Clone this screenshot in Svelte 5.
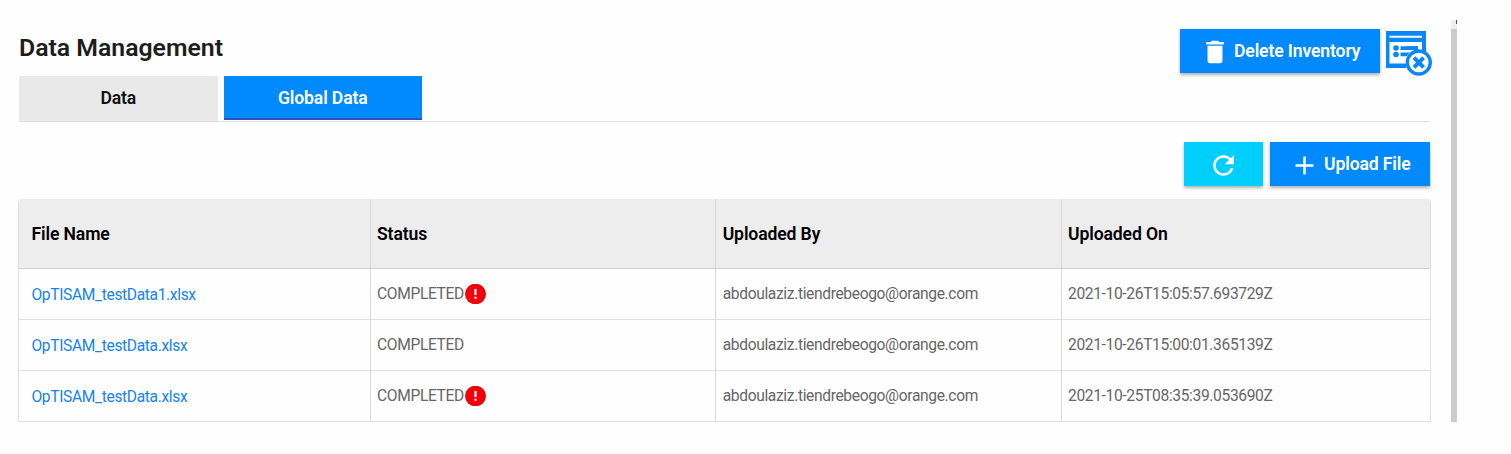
<script>
  const columns = ['File Name', 'Status', 'Uploaded By', 'Uploaded On'];
  const files = [
    { name: 'OpTISAM_testData1.xlsx', failed: true, by: 'abdoulaziz.tiendrebeogo@orange.com', on: '2021-10-26T15:05:57.693729Z' },
    { name: 'OpTISAM_testData.xlsx', failed: false, by: 'abdoulaziz.tiendrebeogo@orange.com', on: '2021-10-26T15:00:01.365139Z' },
    { name: 'OpTISAM_testData.xlsx', failed: true, by: 'abdoulaziz.tiendrebeogo@orange.com', on: '2021-10-25T08:35:39.053690Z' }
  ];
</script>

<div class="page">
  <main>
    <header>
      <div class="heading">
        <h1>Data Management</h1>
        <nav>
          <button class="tab">Data</button>
          <button class="tab active">Global Data</button>
        </nav>
      </div>
      <div class="tools">
        <button class="btn delete">
          <svg width="30" height="30" viewBox="0 0 24 24" fill="#fff"><path d="M6 19c0 1.100.9 2 2 2h8c1.100 0 2-.9 2-2V7H6v12zM19 4h-3.500l-1-1h-5l-1 1H5v2h14V4z" /></svg>
          <span>Delete Inventory</span>
        </button>
        <svg class="log" width="47" height="46" viewBox="0 0 47 46">
          <path fill="#0a87f7" d="M0 0H40V37H0z" />
          <path fill="#fff" d="M3.500 4.800H36V6.800H3.500zM3.500 11H36V32.500H3.500z" />
          <g fill="#0a87f7">
            <circle cx="10" cy="17" r="2.800" />
            <circle cx="10" cy="23.500" r="2.800" />
            <path d="M14.500 15.200H32V18.900H14.500zM14.500 21.600H26V25.300H14.500z" />
          </g>
          <circle cx="32.800" cy="31.500" r="13.500" fill="#fff" />
          <path fill="#0a87f7" d="M36 11h4v10h-4zM0 33h20v4H0zM20 15.200H32V18.900H20z" />
          <circle cx="32.800" cy="31.500" r="11.500" fill="#fff" stroke="#0a87f7" stroke-width="3.400" />
          <path d="M28 26.700l9.600 9.600m0-9.600l-9.600 9.600" stroke="#0a87f7" stroke-width="4" />
        </svg>
      </div>
    </header>

    <div class="actions">
      <button class="btn refresh" aria-label="Refresh">
        <svg width="31" height="31" viewBox="0 0 24 24" fill="#fff"><path d="M17.650 6.350C16.200 4.900 14.210 4 12 4c-4.420 0-7.990 3.580-7.990 8s3.570 8 7.990 8c3.730 0 6.840-2.550 7.730-6h-2.080c-.82 2.330-3.040 4-5.650 4-3.310 0-6-2.690-6-6s2.690-6 6-6c1.660 0 3.140.69 4.220 1.780L13 11h7V4l-2.350 2.350z" /></svg>
      </button>
      <button class="btn upload">
        <svg width="31" height="31" viewBox="0 0 24 24" fill="#fff"><path d="M19 12.950h-6.050V19h-1.900v-6.050H5v-1.900h6.050V5h1.900v6.050H19z" /></svg>
        <span>Upload File</span>
      </button>
    </div>

    <div class="table">
      <div class="row head">
        {#each columns as column}
          <div class="cell">{column}</div>
        {/each}
      </div>
      {#each files as file}
        <div class="row">
          <div class="cell link">{file.name}</div>
          <div class="cell">
            COMPLETED
            {#if file.failed}
              <svg class="alert" width="21" height="20" viewBox="0 0 21 20">
                <ellipse cx="10.500" cy="10" rx="10.500" ry="10.300" fill="#f4000a" />
                <path fill="#fff" d="M9.400 4.900h2.200v6H9.400zM9.400 12.700h2.200v2H9.400z" />
              </svg>
            {/if}
          </div>
          <div class="cell">{file.by}</div>
          <div class="cell">{file.on}</div>
        </div>
      {/each}
    </div>
  </main>
  <div class="scrollbar"><div class="thumb"></div></div>
</div>

<style>
  :global(body) {
    background: #fefefe;
  }
  .page {
    box-sizing: border-box;
    display: flex;
    gap: 20px;
    width: 1511px;
    height: 454px;
    padding: 20px 54px 32px 18px;
    font-family: Roboto, sans-serif;
    font-size: 15.600px;
    overflow: hidden;
  }
  main {
    width: 1413px;
  }
  header {
    box-sizing: border-box;
    display: flex;
    justify-content: space-between;
    height: 102px;
    margin: 0 1px;
    border-bottom: 1px solid #dfdfdf;
  }
  h1 {
    box-sizing: border-box;
    margin: 0;
    padding-top: 12px;
    height: 56px;
    font-size: 24.800px;
    line-height: 31px;
    font-weight: 600;
    color: #1d1d1d;
    white-space: nowrap;
  }
  nav {
    display: flex;
    gap: 6px;
  }
  button {
    border: 0;
    padding: 0;
    font: 600 17.600px/20px Roboto, sans-serif;
    letter-spacing: -0.130px;
    white-space: nowrap;
  }
  .tab {
    box-sizing: border-box;
    width: 198.500px;
    height: 45px;
    padding-bottom: 1px;
    background: #e9e9e9;
    color: #111;
  }
  .active {
    height: 44px;
    padding: 1px 0 0;
    background: #008afe;
    color: #fff;
    border-bottom: 2px solid #2c51bd;
  }
  .tools {
    display: flex;
    gap: 6px;
    margin-right: -3px;
    padding-top: 9px;
  }
  .btn {
    display: flex;
    align-items: center;
    height: 44px;
    background: #008afe;
    color: #fff;
    box-shadow: 0 2px 3px rgba(0, 0, 0, 0.3);
  }
  .delete {
    width: 200px;
    padding-left: 20px;
    gap: 4px;
  }
  .btn svg {
    margin-top: 2px;
  }
  .log {
    margin-top: 2px;
  }
  .actions {
    display: flex;
    justify-content: flex-end;
    gap: 7px;
    height: 57px;
    padding: 20px 1px 0 0;
  }
  .refresh {
    width: 79px;
    justify-content: center;
    background: #00cffe;
  }
  .upload {
    width: 160px;
    padding-left: 19px;
    gap: 4px;
  }
  .table {
    box-sizing: border-box;
    border: 1px solid #dfdfdf;
    border-top: 0;
    border-radius: 4px 4px 0 0;
    overflow: hidden;
    height: 223px;
  }
  .row {
    box-sizing: border-box;
    display: grid;
    grid-template-columns: 351px 345px 346px 1fr;
    height: 51px;
    border-bottom: 1px solid #dfdfdf;
    color: #666;
    letter-spacing: -0.360px;
  }
  .row:last-child {
    border-bottom: 0;
    height: 50px;
  }
  .head {
    height: 70px;
    background: #ededed;
    color: #000;
    font-size: 17.600px;
    font-weight: 600;
    letter-spacing: -0.130px;
    border-color: #d0d0d0;
  }
  .cell {
    display: flex;
    align-items: center;
    border-left: 1px solid #d8d8d8;
    padding-left: 6px;
    white-space: nowrap;
  }
  .cell:first-child {
    border: 0;
    padding-left: 12.500px;
  }
  .cell:nth-child(3) {
    padding-left: 6.700px;
  }
  .row .link {
    color: #1683ee;
    padding-top: 2px;
  }
  .head .cell {
    padding-top: 0;
  }
  .alert {
    margin-left: 1px;
  }
  .scrollbar {
    width: 6px;
    height: 402px;
    padding-top: 9px;
    box-sizing: border-box;
    background: linear-gradient(#555, #555) right top / 1px 4px no-repeat #efefef;
  }
  .thumb {
    height: 393px;
    background: #cbcbcb;
  }
</style>
